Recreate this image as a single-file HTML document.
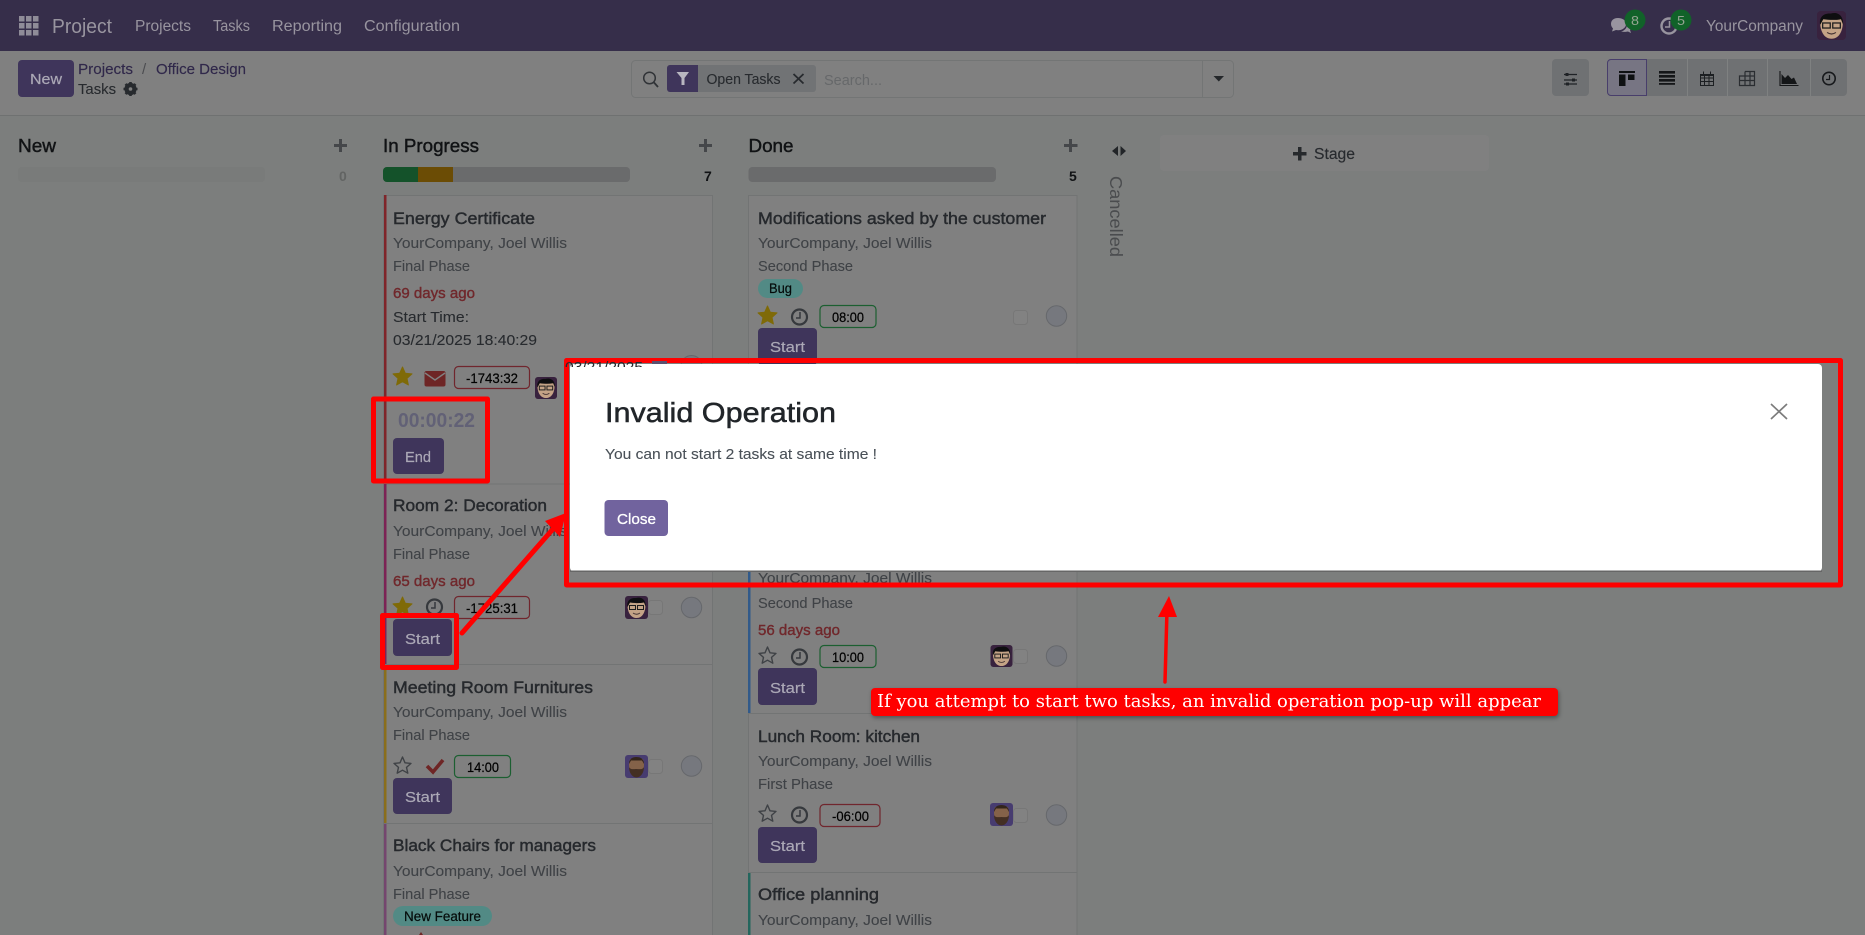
<!DOCTYPE html>
<html><head><meta charset="utf-8"><title>Tasks</title>
<style>
html,body{margin:0;padding:0;background:#7c7e7d;overflow:hidden;width:1865px;height:935px}
svg{display:block}
text{font-family:"Liberation Sans",sans-serif;white-space:pre}
.t{font-size:17px;fill:#26292d;stroke:#26292d;stroke-width:.45}
.m{font-size:15px;fill:#3f4246;stroke:#3f4246;stroke-width:.1}
.r{font-size:15px;fill:#70282c;stroke:#70282c;stroke-width:.4}
.b{font-size:13.5px;fill:#000;stroke:#000;stroke-width:.2}
.s{font-size:15px;fill:#aba8b6;stroke:#aba8b6;stroke-width:.2}
.n{font-size:15.5px;fill:#98949f}
.h{font-size:18.5px;fill:#111315;stroke:#111315;stroke-width:.45}
.c{font-size:14px;font-weight:bold;fill:#111315}
</style></head>
<body>
<svg width="1865" height="935" viewBox="0 0 1865 935" xmlns="http://www.w3.org/2000/svg">
<defs>
<clipPath id="frag"><rect x="563" y="361" width="85" height="6"/></clipPath>
<symbol id="av1" viewBox="0 0 23 23">
<rect width="23" height="23" rx="3" fill="#38223e"/>
<path d="M2.500 9C2.500 15 5 22 11.500 22S20.500 15 20.500 9L19 5H4Z" fill="#c4a386"/>
<path d="M2.500 11C1.500 5 5 1.500 11 2C16 .5 21 3 20.800 11L19 6.500C14 7.500 9 7 5 6.500Z" fill="#0e0e10"/>
<rect x="4.500" y="9.500" width="6" height="4" fill="none" stroke="#1c1c1c" stroke-width="1"/>
<rect x="12.500" y="9.500" width="6" height="4" fill="none" stroke="#1c1c1c" stroke-width="1"/>
<path d="M8 17Q11.500 19.500 15 17" fill="none" stroke="#433" stroke-width=".9"/>
</symbol>
<symbol id="av2" viewBox="0 0 23 23">
<rect width="23" height="23" rx="3" fill="#473c70"/>
<path d="M4 9C4 15 6 22 11.500 22S19 15 19 9L18 4H5Z" fill="#846249"/>
<path d="M4 12C5.500 15 9 14 11.500 14S17.500 15 19 12C19 18 15.500 22.500 11.500 22.500S4 18 4 12Z" fill="#432f23"/>
<path d="M4 9C4 3.500 8 2 11.500 2S19 3.500 19 9L17 5.500H6Z" fill="#33251c"/>
</symbol>
<symbol id="star" viewBox="0 0 20 20"><path d="M10 1L12.800 7.200L19.500 7.900L14.500 12.400L15.900 19L10 15.700L4.100 19L5.500 12.400L.5 7.900L7.200 7.200Z" fill="#7f6a08" stroke="#7f6a08" stroke-linejoin="round"/></symbol>
<symbol id="stare" viewBox="0 0 20 20"><path d="M10 2L12.500 7.800L18.500 8.400L14 12.400L15.300 18.200L10 15.200L4.700 18.200L6 12.400L1.500 8.400L7.500 7.800Z" fill="none" stroke="#3f4246" stroke-width="1.400" stroke-linejoin="round"/></symbol>
<symbol id="clk" viewBox="0 0 18 18"><circle cx="9" cy="9" r="7.500" fill="none" stroke="#36393d" stroke-width="2.200"/><path d="M9.500 4V10H5.500" fill="none" stroke="#36393d" stroke-width="1.500"/></symbol>
</defs>

<!-- backgrounds -->
<rect width="1865" height="935" fill="#7c7e7d"/>
<rect width="1865" height="51" fill="#362e4a"/>
<rect y="51" width="1865" height="64" fill="#808080"/>
<rect y="115" width="1865" height="1" fill="#6f7171"/>

<!-- nav -->
<g fill="#8f8c98">
<rect x="19" y="16" width="5.500" height="5.500"/><rect x="26" y="16" width="5.500" height="5.500"/><rect x="33" y="16" width="5.500" height="5.500"/>
<rect x="19" y="23" width="5.500" height="5.500"/><rect x="26" y="23" width="5.500" height="5.500"/><rect x="33" y="23" width="5.500" height="5.500"/>
<rect x="19" y="30" width="5.500" height="5.500"/><rect x="26" y="30" width="5.500" height="5.500"/><rect x="33" y="30" width="5.500" height="5.500"/>
</g>
<text x="52" y="33" textLength="60" lengthAdjust="spacingAndGlyphs" fill="#98949f" style="font-size:20.5px">Project</text>
<text class="n" x="135" y="31" textLength="56" lengthAdjust="spacingAndGlyphs">Projects</text>
<text class="n" x="213" y="31" textLength="37" lengthAdjust="spacingAndGlyphs">Tasks</text>
<text class="n" x="272" y="31" textLength="70" lengthAdjust="spacingAndGlyphs">Reporting</text>
<text class="n" x="364" y="31" textLength="96" lengthAdjust="spacingAndGlyphs">Configuration</text>

<!-- top right -->
<path d="M1618 18C1613 18 1611 21 1611 24C1611 26 1612 27.500 1613 28.500L1612 31.500L1616 30C1620 31 1626 29 1626 24C1626 20 1622 18 1618 18Z" fill="#98949f"/>
<path d="M1627 25C1627 28 1624 31 1621 31.500C1623 32 1626 32 1628 31.500L1631 33L1630 30C1632 28 1631 25 1627 25Z" fill="#98949f"/>
<circle cx="1635" cy="20" r="10.500" fill="#116229"/>
<text x="1631" y="25" fill="#94a492" style="font-size:13px" textLength="8" lengthAdjust="spacingAndGlyphs">8</text>
<circle cx="1669" cy="26" r="7.500" fill="none" stroke="#98949f" stroke-width="2.400"/>
<path d="M1669.500 21V27H1665" fill="none" stroke="#98949f" stroke-width="1.500"/>
<circle cx="1681" cy="20" r="10.500" fill="#116229"/>
<text x="1677" y="25" style="font-size:13px" fill="#94a492" textLength="8" lengthAdjust="spacingAndGlyphs">5</text>
<text class="n" x="1706" y="31" textLength="97" lengthAdjust="spacingAndGlyphs">YourCompany</text>
<use href="#av1" x="1817" y="11" width="29" height="29"/>

<!-- control panel -->
<rect x="18" y="60" width="56" height="37" rx="4" fill="#3f355b"/>
<text class="s" x="30" y="84" textLength="32" lengthAdjust="spacingAndGlyphs">New</text>
<text x="78" y="74" style="font-size:15px" fill="#30284a" stroke="#30284a" stroke-width=".15" textLength="55" lengthAdjust="spacingAndGlyphs">Projects</text>
<text x="142" y="74" style="font-size:15px" fill="#4b4c50">/</text>
<text x="156" y="74" style="font-size:15px" fill="#30284a" stroke="#30284a" stroke-width=".15" textLength="90" lengthAdjust="spacingAndGlyphs">Office Design</text>
<text x="78" y="94" style="font-size:15px" fill="#272a2e" stroke="#272a2e" stroke-width=".1" textLength="38" lengthAdjust="spacingAndGlyphs">Tasks</text>
<g transform="translate(130.500 89)"><circle r="4.600" fill="none" stroke="#272a2e" stroke-width="3"/>
<g stroke="#272a2e" stroke-width="2.600"><path d="M0-7V7M-7 0H7M-5-5L5 5M5-5L-5 5"/></g><circle r="1.800" fill="#808080"/></g>

<!-- search -->
<rect x="631.500" y="60.500" width="602" height="37" rx="4" fill="#808080" stroke="#737575"/>
<path d="M1202.500 60V98" stroke="#737575"/>
<circle cx="649.500" cy="78" r="5.800" fill="none" stroke="#303337" stroke-width="1.500"/><path d="M654 82.500L658 87" stroke="#303337" stroke-width="1.800"/>
<rect x="667" y="65" width="149" height="27" rx="3" fill="#717375"/>
<path d="M670 65H698V92H670A3 3 0 0 1 667 89V68A3 3 0 0 1 670 65Z" fill="#3f355b"/>
<path d="M676.500 72H689L684.500 78V85H681.500V78Z" fill="#b8b6c0"/>
<text x="706.500" y="84" style="font-size:14.5px" fill="#272a2e" stroke="#272a2e" stroke-width=".1" textLength="74" lengthAdjust="spacingAndGlyphs">Open Tasks</text>
<path d="M793.500 74L803.500 83.500M803.500 74L793.500 83.500" stroke="#272a2e" stroke-width="1.800"/>
<text x="824" y="85" style="font-size:15px" fill="#66686a" textLength="58" lengthAdjust="spacingAndGlyphs">Search...</text>
<path d="M1213.500 76H1224L1218.800 81.500Z" fill="#24272a"/>

<!-- buttons -->
<rect x="1552" y="59" width="37" height="37" rx="4" fill="#6f7173"/>
<g stroke="#1f2226" stroke-width="1.200" fill="#1f2226"><path d="M1564 74.500H1577M1564 80H1577M1564 84H1577"/></g>
<rect x="1565.500" y="73" width="3" height="3" fill="#1f2226"/><rect x="1572" y="78.500" width="3" height="3" fill="#1f2226"/><rect x="1566" y="82.500" width="3" height="3" fill="#1f2226"/>
<rect x="1607" y="59" width="240" height="37" rx="4" fill="#6f7173"/>
<path d="M1611 59.500H1646.500V95.500H1611A3.500 3.500 0 0 1 1607.500 92V63A3.500 3.500 0 0 1 1611 59.500Z" fill="#777583" stroke="#483e6b"/>
<g stroke="#7f8181"><path d="M1687.500 59V96M1727.500 59V96M1767.500 59V96M1810.500 59V96"/></g>
<g fill="#0f1113"><rect x="1619" y="71" width="16" height="2"/><rect x="1619" y="74.500" width="6.500" height="11.500"/><rect x="1628" y="74.500" width="6.500" height="5.500"/></g>
<g fill="#141618"><rect x="1659" y="71" width="16" height="2.600"/><rect x="1659" y="75" width="16" height="2.600"/><rect x="1659" y="79" width="16" height="2.600"/><rect x="1659" y="83" width="16" height="1.800"/></g>
<g fill="none" stroke="#1c1f22" stroke-width="1"><rect x="1700.500" y="74.500" width="13" height="11"/><path d="M1700 78H1714M1700 81.500H1714M1704.500 75V85M1709 75V85M1703.500 71.500V75M1710.500 71.500V75"/></g>
<rect x="1700.500" y="74" width="13" height="2" fill="#1c1f22"/>
<g fill="none" stroke="#2a2d31" stroke-width="1.200"><path d="M1745 71.500H1754.500V85.500H1739.500V76H1754.500M1739.500 80.500H1754.500M1745 71.500V85.500M1750 71.500V85.500"/></g>
<path d="M1780 71V85.500H1798.500" fill="none" stroke="#141618" stroke-width="1.100"/>
<path d="M1781.500 84V74L1785 78L1788 75L1791.500 79L1794 77.500L1797 84Z" fill="#141618"/>
<circle cx="1829" cy="78.500" r="6.200" fill="none" stroke="#17191c" stroke-width="1.600"/><path d="M1829.500 75V79.500H1826" fill="none" stroke="#17191c" stroke-width="1.200"/>

<!-- column headers -->
<text class="h" x="18" y="152" textLength="38" lengthAdjust="spacingAndGlyphs">New</text>
<text class="h" x="383" y="152" textLength="96" lengthAdjust="spacingAndGlyphs">In Progress</text>
<text class="h" x="748.500" y="152" textLength="45" lengthAdjust="spacingAndGlyphs">Done</text>
<g fill="#45474a">
<path d="M339 139H342V144H347V147H342V152H339V147H334V144H339Z"/>
<path d="M704 139H707V144H712V147H707V152H704V147H699V144H704Z"/>
<path d="M1069 139H1072V144H1077.500V147H1072V152H1069V147H1064V144H1069Z"/>
</g>
<rect x="18" y="167" width="247" height="15" rx="4" fill="#797b7a"/>
<rect x="383" y="167" width="247" height="15" rx="4" fill="#6a6b6c"/>
<path d="M387 167H418V182H387A4 4 0 0 1 383 178V171A4 4 0 0 1 387 167Z" fill="#14522a"/>
<rect x="418" y="167" width="35" height="15" fill="#6b4c05"/>
<rect x="748.500" y="167" width="247.500" height="15" rx="4" fill="#6a6b6c"/>
<text class="c" x="339" y="181" style="fill:#626463">0</text>
<text class="c" x="704" y="181">7</text>
<text class="c" x="1069" y="181">5</text>
<path d="M1112 151L1118 146V156ZM1126 151L1120.500 146V156Z" fill="#222528"/>
<text transform="translate(1110 176) rotate(90)" style="font-size:17.5px" fill="#4a4c4e" textLength="81" lengthAdjust="spacingAndGlyphs">Cancelled</text>
<rect x="1160" y="135" width="329" height="36" rx="4" fill="#808080"/>
<path d="M1298 147H1301.500V152H1306.500V155.500H1301.500V160.500H1298V155.500H1293V152H1298Z" fill="#26292c"/>
<text x="1314" y="159" style="font-size:15.5px" fill="#272a2e" stroke="#272a2e" stroke-width=".15" textLength="41" lengthAdjust="spacingAndGlyphs">Stage</text>

<!-- column 2 cards -->
<rect x="383.500" y="195.500" width="329" height="740" fill="#808080" stroke="#727474"/>
<path d="M384 484H712M384 664.500H712M384 823.500H712" stroke="#727474"/>
<rect x="384" y="195" width="2.500" height="288" fill="#80252a"/>
<rect x="384" y="484" width="2.500" height="180" fill="#7c2355"/>
<rect x="384" y="665" width="2.500" height="158" fill="#8a6e1c"/>
<rect x="384" y="824" width="2.500" height="111" fill="#74466e"/>

<text class="t" x="393" y="224" textLength="142" lengthAdjust="spacingAndGlyphs">Energy Certificate</text>
<text class="m" x="393" y="248" textLength="174" lengthAdjust="spacingAndGlyphs">YourCompany, Joel Willis</text>
<text class="m" x="393" y="271" textLength="77" lengthAdjust="spacingAndGlyphs">Final Phase</text>
<text class="r" x="393" y="298" textLength="82" lengthAdjust="spacingAndGlyphs">69 days ago</text>
<text class="m" x="393" y="322" style="fill:#272a2e;stroke:#272a2e" textLength="76" lengthAdjust="spacingAndGlyphs">Start Time:</text>
<text class="m" x="393" y="345" style="fill:#272a2e;stroke:#272a2e" textLength="144" lengthAdjust="spacingAndGlyphs">03/21/2025 18:40:29</text>
<use href="#star" x="392.500" y="366" width="20" height="20"/>
<rect x="424.500" y="371" width="21" height="15.500" rx="2" fill="#6e2525"/>
<path d="M425 373L435 380L445 373" fill="none" stroke="#808080" stroke-width="1.400"/>
<rect x="454.500" y="366.500" width="75" height="22" rx="4" fill="#808080" stroke="#70262d" stroke-width="1.200"/>
<text class="b" x="466" y="383" textLength="52" lengthAdjust="spacingAndGlyphs">-1743:32</text>
<use href="#av1" x="535" y="377" width="22" height="22"/>
<text x="398" y="427" style="font-size:20px;font-weight:bold" fill="#626176" textLength="77" lengthAdjust="spacingAndGlyphs">00:00:22</text>
<rect x="393" y="438" width="51" height="36" rx="4" fill="#3f355b"/>
<text class="s" x="405" y="462" textLength="26" lengthAdjust="spacingAndGlyphs">End</text>
<circle cx="691.500" cy="366" r="10.500" fill="#76787e" stroke="#66686c"/>

<text class="t" x="393" y="511" textLength="154" lengthAdjust="spacingAndGlyphs">Room 2: Decoration</text>
<text class="m" x="393" y="536" textLength="174" lengthAdjust="spacingAndGlyphs">YourCompany, Joel Willis</text>
<text class="m" x="393" y="559" textLength="77" lengthAdjust="spacingAndGlyphs">Final Phase</text>
<text class="r" x="393" y="586" textLength="82" lengthAdjust="spacingAndGlyphs">65 days ago</text>
<use href="#star" x="392.500" y="596" width="20" height="20"/>
<use href="#clk" x="425.500" y="598" width="18" height="18"/>
<rect x="454.500" y="596.500" width="75" height="22" rx="4" fill="#808080" stroke="#70262d" stroke-width="1.200"/>
<text class="b" x="466" y="613" textLength="52" lengthAdjust="spacingAndGlyphs">-1725:31</text>
<use href="#av1" x="625" y="596" width="23" height="23"/>
<rect x="648.500" y="600.500" width="14" height="14" rx="3" fill="#828282" stroke="#777"/>
<circle cx="691.500" cy="607.500" r="10.200" fill="#76787e" stroke="#66686c"/>
<rect x="393" y="619" width="59" height="37" rx="4" fill="#3f355b"/>
<text class="s" x="405" y="644" textLength="35" lengthAdjust="spacingAndGlyphs">Start</text>

<text class="t" x="393" y="693" textLength="200" lengthAdjust="spacingAndGlyphs">Meeting Room Furnitures</text>
<text class="m" x="393" y="717" textLength="174" lengthAdjust="spacingAndGlyphs">YourCompany, Joel Willis</text>
<text class="m" x="393" y="740" textLength="77" lengthAdjust="spacingAndGlyphs">Final Phase</text>
<use href="#stare" x="392.500" y="755" width="20" height="20"/>
<path d="M427 766L433 772L443 760" fill="none" stroke="#6e2525" stroke-width="3.600"/>
<rect x="454.500" y="755.500" width="56" height="22" rx="4" fill="#808080" stroke="#1c5f31" stroke-width="1.200"/>
<text class="b" x="467" y="772" textLength="32" lengthAdjust="spacingAndGlyphs">14:00</text>
<use href="#av2" x="625" y="755" width="23" height="23"/>
<rect x="648.500" y="759.500" width="14" height="14" rx="3" fill="#828282" stroke="#777"/>
<circle cx="691.500" cy="766" r="10.200" fill="#76787e" stroke="#66686c"/>
<rect x="393" y="778" width="59" height="36" rx="4" fill="#3f355b"/>
<text class="s" x="405" y="802" textLength="35" lengthAdjust="spacingAndGlyphs">Start</text>

<text class="t" x="393" y="851" textLength="203" lengthAdjust="spacingAndGlyphs">Black Chairs for managers</text>
<text class="m" x="393" y="876" textLength="174" lengthAdjust="spacingAndGlyphs">YourCompany, Joel Willis</text>
<text class="m" x="393" y="899" textLength="77" lengthAdjust="spacingAndGlyphs">Final Phase</text>
<rect x="393" y="906" width="99" height="20" rx="10" fill="#528a85"/>
<text x="404" y="921" style="font-size:13.5px" fill="#050b0a" stroke="#050b0a" stroke-width=".2" textLength="77" lengthAdjust="spacingAndGlyphs">New Feature</text>
<path d="M419 935L421 932L423 935Z" fill="#6e2525"/>

<!-- column 3 cards -->
<rect x="748.500" y="195.500" width="328.500" height="740" fill="#808080" stroke="#727474"/>
<path d="M749 713.500H1077M749 872.500H1077" stroke="#727474"/>
<rect x="748" y="560" width="2.500" height="153" fill="#315a8a"/>
<rect x="748" y="873" width="2.500" height="62" fill="#23665d"/>

<text class="t" x="758" y="224" textLength="288" lengthAdjust="spacingAndGlyphs">Modifications asked by the customer</text>
<text class="m" x="758" y="248" textLength="174" lengthAdjust="spacingAndGlyphs">YourCompany, Joel Willis</text>
<text class="m" x="758" y="271" textLength="95" lengthAdjust="spacingAndGlyphs">Second Phase</text>
<rect x="758" y="279" width="45" height="19" rx="9.500" fill="#528a85"/>
<text x="769" y="293" style="font-size:13.5px" fill="#050b0a" stroke="#050b0a" stroke-width=".2" textLength="23" lengthAdjust="spacingAndGlyphs">Bug</text>
<use href="#star" x="757.500" y="305" width="20" height="20"/>
<use href="#clk" x="790.500" y="308" width="18" height="18"/>
<rect x="820" y="305.500" width="56" height="22" rx="4" fill="#808080" stroke="#1c5f31" stroke-width="1.200"/>
<text class="b" x="832" y="322" textLength="32" lengthAdjust="spacingAndGlyphs">08:00</text>
<rect x="1013.500" y="310.500" width="14" height="14" rx="3" fill="#828282" stroke="#777"/>
<circle cx="1056.500" cy="316" r="10.200" fill="#76787e" stroke="#66686c"/>
<rect x="758" y="328" width="59" height="37" rx="4" fill="#3f355b"/>
<text class="s" x="770" y="352" textLength="35" lengthAdjust="spacingAndGlyphs">Start</text>

<text class="m" x="758" y="583" textLength="174" lengthAdjust="spacingAndGlyphs">YourCompany, Joel Willis</text>
<text class="m" x="758" y="608" textLength="95" lengthAdjust="spacingAndGlyphs">Second Phase</text>
<text class="r" x="758" y="635" textLength="82" lengthAdjust="spacingAndGlyphs">56 days ago</text>
<use href="#stare" x="757.500" y="645" width="20" height="20"/>
<use href="#clk" x="790.500" y="648" width="18" height="18"/>
<rect x="820" y="645.500" width="56" height="22" rx="4" fill="#808080" stroke="#1c5f31" stroke-width="1.200"/>
<text class="b" x="832" y="662" textLength="32" lengthAdjust="spacingAndGlyphs">10:00</text>
<use href="#av1" x="990" y="645" width="23" height="22"/>
<rect x="1013.500" y="649.500" width="14" height="14" rx="3" fill="#828282" stroke="#777"/>
<circle cx="1056.500" cy="656" r="10.200" fill="#76787e" stroke="#66686c"/>
<rect x="758" y="668" width="59" height="37" rx="4" fill="#3f355b"/>
<text class="s" x="770" y="693" textLength="35" lengthAdjust="spacingAndGlyphs">Start</text>

<text class="t" x="758" y="742" textLength="162" lengthAdjust="spacingAndGlyphs">Lunch Room: kitchen</text>
<text class="m" x="758" y="766" textLength="174" lengthAdjust="spacingAndGlyphs">YourCompany, Joel Willis</text>
<text class="m" x="758" y="789" textLength="75" lengthAdjust="spacingAndGlyphs">First Phase</text>
<use href="#stare" x="757.500" y="803" width="20" height="20"/>
<use href="#clk" x="790.500" y="806" width="18" height="18"/>
<rect x="820" y="804.500" width="60" height="22" rx="4" fill="#808080" stroke="#70262d" stroke-width="1.200"/>
<text class="b" x="832" y="821" textLength="37" lengthAdjust="spacingAndGlyphs">-06:00</text>
<use href="#av2" x="990" y="803" width="23" height="23"/>
<rect x="1013.500" y="808.500" width="14" height="14" rx="3" fill="#828282" stroke="#777"/>
<circle cx="1056.500" cy="815" r="10.200" fill="#76787e" stroke="#66686c"/>
<rect x="758" y="827" width="59" height="36" rx="4" fill="#3f355b"/>
<text class="s" x="770" y="851" textLength="35" lengthAdjust="spacingAndGlyphs">Start</text>

<text class="t" x="758" y="900" textLength="121" lengthAdjust="spacingAndGlyphs">Office planning</text>
<text class="m" x="758" y="925" textLength="174" lengthAdjust="spacingAndGlyphs">YourCompany, Joel Willis</text>

<!-- modal -->
<rect x="570" y="364" width="1252" height="207.500" rx="4" fill="#fff"/>
<rect x="570" y="570.500" width="1252" height="1.500" fill="#666"/>
<text x="605" y="422" style="font-size:28px" fill="#212529" stroke="#212529" stroke-width=".5" textLength="231" lengthAdjust="spacingAndGlyphs">Invalid Operation</text>
<text x="605" y="459" style="font-size:15px" fill="#495057" stroke="#495057" stroke-width=".1" textLength="272" lengthAdjust="spacingAndGlyphs">You can not start 2 tasks at same time !</text>
<rect x="604.500" y="500" width="63.500" height="36" rx="4" fill="#71639e"/>
<text x="617" y="524" style="font-size:15px" fill="#fff" stroke="#fff" stroke-width=".3" textLength="39" lengthAdjust="spacingAndGlyphs">Close</text>
<path d="M1771 404L1787 419M1787 404L1771 419" stroke="#7c7c7c" stroke-width="1.700"/>

<!-- annotations -->
<g fill="none" stroke="#f00" stroke-linejoin="round">
<rect x="566.500" y="360.500" width="1274" height="224.500" stroke-width="5"/>
<rect x="373.500" y="399" width="114" height="82" stroke-width="5"/>
<rect x="382.500" y="615.500" width="74" height="52" stroke-width="5"/>
</g>
<g clip-path="url(#frag)"><text x="565" y="372" style="font-size:15px" fill="#272a2e" textLength="78" lengthAdjust="spacingAndGlyphs">03/21/2025</text></g>
<rect x="652" y="361" width="15" height="3" fill="#5a5070"/>
<path d="M462 633L553 529" stroke="#f00" stroke-width="5" stroke-linecap="round"/>
<path d="M566 513L545 521L560 537Z" fill="#f00"/>
<path d="M1165 682L1167 610" stroke="#f00" stroke-width="3.500" stroke-linecap="round"/>
<path d="M1169 596L1158 617H1177Z" fill="#f00"/>
<rect x="871" y="688" width="687" height="28" rx="4" fill="#f00" style="filter:drop-shadow(1px 2px 2px rgba(0,0,0,.35))"/>
<text x="877" y="707" style="font-family:'DejaVu Serif','Liberation Serif',serif;font-size:18px" fill="#fff" textLength="664" lengthAdjust="spacingAndGlyphs">If you attempt to start two tasks, an invalid operation pop-up will appear</text>
</svg>
</body></html>
